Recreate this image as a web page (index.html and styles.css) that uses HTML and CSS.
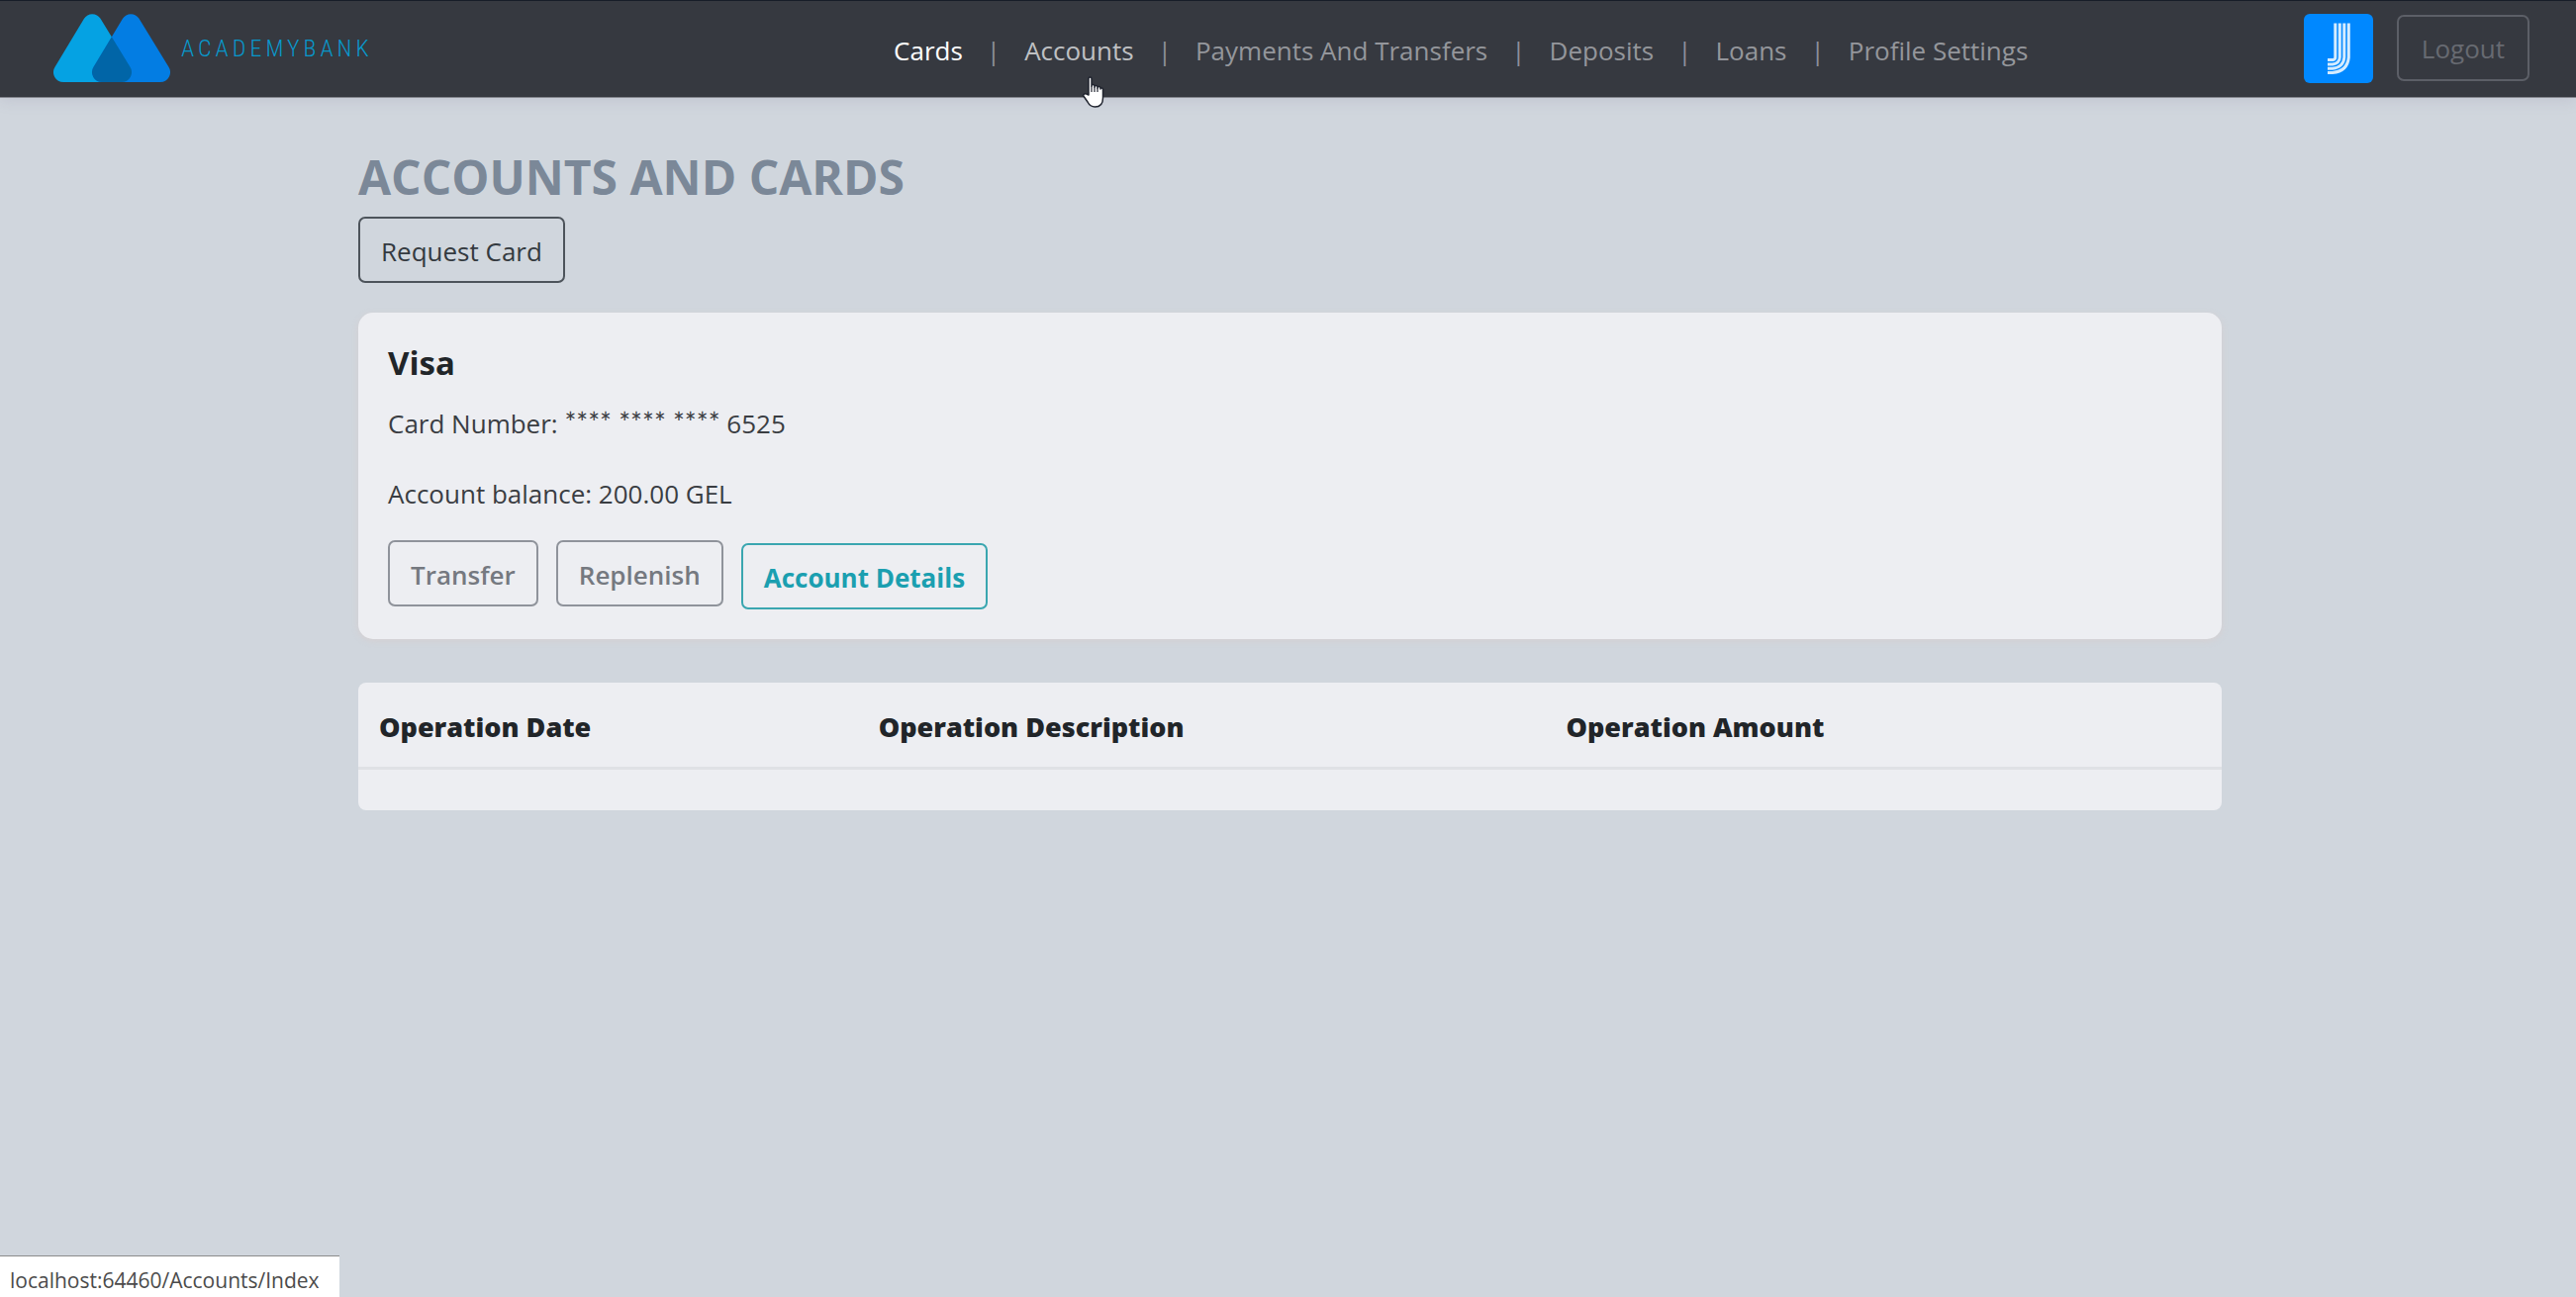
FILE: index.html
```
<!DOCTYPE html>
<html lang="en">
<head>
<meta charset="utf-8">
<meta name="viewport" content="width=device-width, initial-scale=1">
<title>Accounts and Cards - Academy Bank</title>
<link rel="stylesheet" href="styles.css">
</head>
<body>
<header class="topbar">
  <a class="brand" href="#">
    <svg class="brand-mark" viewBox="0 0 118 70" width="118" height="70" aria-hidden="true">
      <defs><clipPath id="left-peak"><path d="M47.5 4.8 77.5 53.8A10 10 0 0 1 69 69H10A10 10 0 0 1 1.5 53.8L31 4.8A9.7 9.7 0 0 1 47.5 4.8Z"/></clipPath></defs>
      <path fill="#05a2e3" d="M47.5 4.8 77.5 53.8A10 10 0 0 1 69 69H10A10 10 0 0 1 1.5 53.8L31 4.8A9.7 9.7 0 0 1 47.5 4.8Z"/>
      <path fill="#037de3" d="M86.5 4.8 116.5 53.8A10 10 0 0 1 108 69H49A10 10 0 0 1 40.5 53.8L70 4.8A9.7 9.7 0 0 1 86.5 4.8Z"/>
      <path fill="#0165a7" clip-path="url(#left-peak)" d="M86.5 4.8 116.5 53.8A10 10 0 0 1 108 69H49A10 10 0 0 1 40.5 53.8L70 4.8A9.7 9.7 0 0 1 86.5 4.8Z"/>
    </svg>
    <span class="brand-name">ACADEMYBANK</span>
  </a>
  <nav class="menu" aria-label="Main">
    <a class="menu-link is-active" href="#">Cards</a><span class="bar">|</span>
    <span class="hovered"><a class="menu-link is-hover" href="#">Accounts</a>
      <svg class="pointer" viewBox="0 0 24 32" width="24" height="32" aria-hidden="true"><path fill="#fff" stroke="#20242f" stroke-width="1.5" stroke-linejoin="round" d="M7 19V2.5Q7 1 8.500 1T10 2.5V10Q10 8.5 11.5 8.5T13 10V11Q13 9.5 14.5 9.5T16 11V12Q16 10.5 17.5 10.5T19 12V13Q19 11.5 20.500 12T21.5 14V22Q21.5 31 13.5 31Q8.5 31 6 26L1.5 19.5Q2.5 17 5 18Z"/><path fill="none" stroke="#20242f" stroke-width="1.2" d="M10 10V16M13 11V16M16 12V16"/></svg>
    </span><span class="bar">|</span>
    <a class="menu-link" href="#">Payments And Transfers</a><span class="bar">|</span>
    <a class="menu-link" href="#">Deposits</a><span class="bar">|</span>
    <a class="menu-link" href="#">Loans</a><span class="bar">|</span>
    <a class="menu-link" href="#">Profile Settings</a>
  </nav>
  <div class="session">
    <a class="avatar" href="#" aria-label="Profile">
      <svg viewBox="0 0 70 70" width="70" height="70" aria-hidden="true"><g fill="none" stroke="#d5ecff" stroke-width="3"><path d="M31.8 9.5V44Q31.8 46 29.5 46.5H24"/><path d="M36.3 9.5V44Q36 50 29 51H24"/><path d="M40.8 9.5V44Q40 54 29 55.3H24"/><path d="M45.3 9.5V44Q44 58 29 59.5H24"/></g></svg>
    </a>
    <button class="btn btn-logout" type="button">Logout</button>
  </div>
</header>

<main class="page">
  <h1 class="page-title">ACCOUNTS AND CARDS</h1>
  <button class="btn btn-dark" type="button">Request Card</button>

  <section class="card">
    <h2 class="card-title">Visa</h2>
    <p class="card-line">Card Number: <span class="mask">**** **** ****</span> 6525</p>
    <p class="card-line card-balance">Account balance: 200.00 GEL</p>
    <div class="card-actions">
      <button class="btn btn-grey" type="button">Transfer</button>
      <button class="btn btn-grey" type="button">Replenish</button>
      <button class="btn btn-info" type="button">Account Details</button>
    </div>
  </section>

  <table class="operations">
    <colgroup><col class="col-date"><col class="col-description"><col class="col-amount"></colgroup>
    <thead><tr><th scope="col">Operation Date</th><th scope="col">Operation Description</th><th scope="col">Operation Amount</th></tr></thead>
    <tbody><tr><td colspan="3"></td></tr></tbody>
  </table>
</main>

<div class="link-status">localhost:64460/Accounts/Index</div>
</body>
</html>
```
FILE: styles.css
```
* { box-sizing: border-box; }

body {
  margin: 0;
  min-height: 100vh;
  background: #d0d6dd;
  color: #212529;
  font: 26px/40px "Open Sans", "Noto Sans", sans-serif;
}

h1, h2, p { margin: 0; }
a { color: inherit; text-decoration: none; }

/* Top bar */
.topbar {
  display: flex;
  align-items: center;
  height: 99px;
  padding: 0 47px 2px 54px;
  background: #363940;
  border-top: 1px solid #171d28;
  border-bottom: 1px solid #85878f;
  box-shadow: 0 2px 14px rgba(120, 110, 150, .18);
}
.brand { display: flex; align-items: center; gap: 11px; }
.brand-mark { display: block; }
.brand-name {
  color: #0898cc;
  font: 300 24px/30px "Roboto Condensed", Roboto, sans-serif;
  letter-spacing: 4px;
}
.menu {
  flex: 1;
  display: flex;
  align-items: center;
  justify-content: center;
  gap: 24px;
  padding: 4px 0 0 248px;
  white-space: nowrap;
}
.menu-link { color: #94969b; }
.menu-link.is-active { color: #fff; }
.menu-link.is-hover { color: #bfc0c3; }
.bar { color: #8d8f9a; }
.hovered { position: relative; }
.pointer { position: absolute; left: 58px; top: 46px; }
.session { display: flex; align-items: center; gap: 24px; }
.avatar {
  display: block;
  height: 70px;
  border-radius: 6px;
  background: #0088ff;
}

/* Buttons */
.btn {
  height: 67px;
  padding: 2px 21px 0;
  border: 2px solid;
  border-radius: 7px;
  background: transparent;
  font: inherit;
}
.btn-logout { padding: 0 23px; color: #676a71; border-color: #5c5f67; }
.btn-dark { color: #343a40; border-color: #4d545b; }
.btn-grey { color: #757980; border-color: #8f939b; }
.btn-info { color: #1b9fb0; border-color: #3aa6b0; }

/* Page */
.page { padding: 51px 358px 0 362px; }
.page-title {
  margin-bottom: 11px;
  color: #7b8898;
  font-size: 48px;
  line-height: 58px;
}
.page > .btn { display: block; }

.card {
  margin-top: 30px;
  padding: 31px 30px 30px;
  border-radius: 15px;
  background: #edeef2;
  box-shadow: 0 2px 6px rgba(215, 205, 205, .7);
}
.card-title { font-size: 33px; line-height: 40px; }
.card-line { margin-top: 21px; color: #3a3d42; }
.mask { font-family: Lato, sans-serif; font-size: 28px; line-height: 30px; }
.card-balance { margin-top: 31px; }
.card-actions { display: flex; align-items: flex-start; gap: 18px; margin-top: 27px; }
.btn-grey { font-weight: 600; }
.btn-info { margin-top: 3px; font-weight: 700; }

.operations {
  width: 100%;
  margin-top: 44px;
  table-layout: fixed;
  border-collapse: separate;
  border-spacing: 0;
  border-radius: 8px;
  background: #edeef2;
}
.col-date { width: 26.8%; }
.col-description { width: 36.9%; }
.operations th {
  padding: 25px 21px 20px;
  border-bottom: 3px solid #dfe1e5;
  font-size: 27px;
  font-weight: 800;
  text-align: left;
}
.operations td { height: 41px; padding: 0; }

/* Browser link preview */
.link-status {
  position: fixed;
  left: 0;
  bottom: 0;
  padding: 9px 20px 2px 10px;
  border-top: 1px solid #8b8b8b;
  background: #fff;
  color: #4b4b4b;
  font-size: 21px;
  line-height: 30px;
}
```
